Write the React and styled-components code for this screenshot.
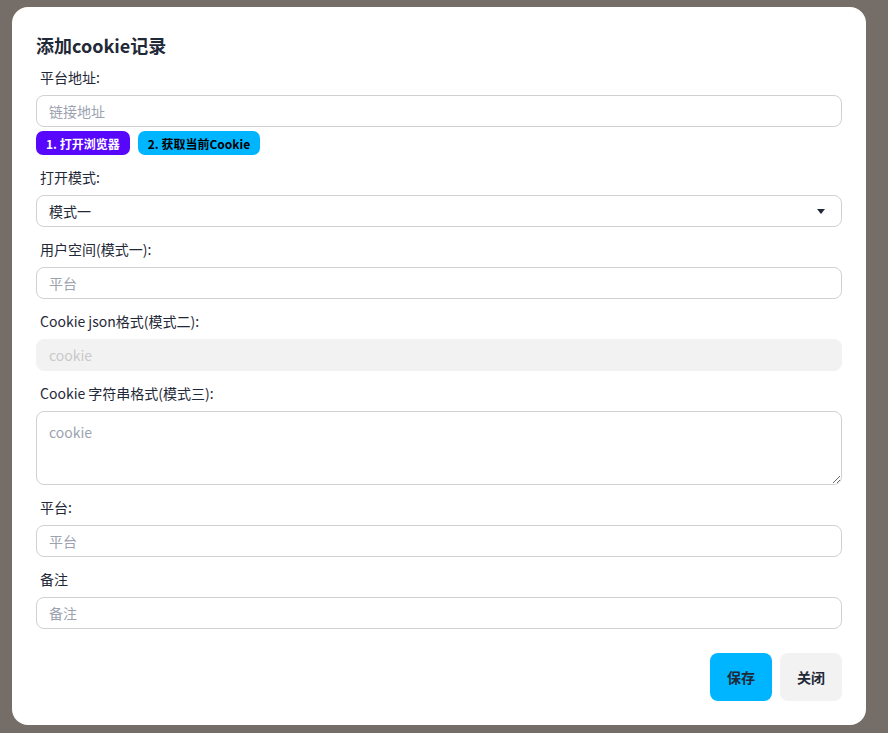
import React from "react";
import styled, { createGlobalStyle } from "styled-components";

const GlobalStyle = createGlobalStyle`
  html, body {
    margin: 0;
    padding: 0;
    background: #756d68;
  }
  body {
    font-family: "Noto Sans CJK SC", "Noto Sans", sans-serif;
    color: #1f2937;
  }
  * { box-sizing: border-box; }
`;

const fields = [
  { label: "用户空间(模式一):", placeholder: "平台" },
];

const App = () => {
  return (
    <>
      <GlobalStyle />
      <Backdrop>
        <Modal>
          <Title>添加cookie记录</Title>

          <Field>
            <Label>平台地址:</Label>
            <Input placeholder="链接地址" />
            <BadgeRow>
              <Badge $bg="#5707fb" $color="#ffffff">1. 打开浏览器</Badge>
              <Badge $bg="#00b5ff" $color="#000000">2. 获取当前Cookie</Badge>
            </BadgeRow>
          </Field>

          <Field>
            <Label>打开模式:</Label>
            <SelectWrap>
              <Select defaultValue="1">
                <option value="1">模式一</option>
                <option value="2">模式二</option>
                <option value="3">模式三</option>
              </Select>
              <Caret viewBox="0 0 8 5" width="8" height="5">
                <path d="M0 0h8L4 5z" fill="#1f2937" />
              </Caret>
            </SelectWrap>
          </Field>

          {fields.map((f) => (
            <Field key={f.label}>
              <Label>{f.label}</Label>
              <Input placeholder={f.placeholder} />
            </Field>
          ))}

          <Field>
            <Label>Cookie json格式(模式二):</Label>
            <Input placeholder="cookie" disabled />
          </Field>

          <Field>
            <Label>Cookie 字符串格式(模式三):</Label>
            <TextArea placeholder="cookie" />
          </Field>

          <Field>
            <Label>平台:</Label>
            <Input placeholder="平台" />
          </Field>

          <Field>
            <Label>备注</Label>
            <Input placeholder="备注" />
          </Field>

          <Actions>
            <ActionButton $bg="#00b5ff">保存</ActionButton>
            <ActionButton $bg="#f2f2f2">关闭</ActionButton>
          </Actions>
        </Modal>
      </Backdrop>
    </>
  );
};

const Backdrop = styled.div`
  min-height: 733px;
  padding: 7px 22px 8px 12px;
`;

const Modal = styled.div`
  width: 854px;
  background: #ffffff;
  border-radius: 16px;
  padding: 24px;
  display: flex;
  flex-direction: column;
  gap: 4px;
`;

const Title = styled.h3`
  margin: 0 0 -4px;
  font-size: 18px;
  line-height: 28px;
  font-weight: 700;
  color: #1f2937;
`;

const Field = styled.div`
  display: flex;
  flex-direction: column;
`;

const Label = styled.label`
  display: block;
  padding: 8px 4px;
  font-size: 14px;
  line-height: 20px;
  color: #1f2937;
`;

const Input = styled.input`
  height: 32px;
  width: 100%;
  padding: 0 12px;
  border: 1px solid #d1d1d1;
  border-radius: 8px;
  font-family: inherit;
  font-size: 14px;
  color: #1f2937;
  background: #ffffff;
  outline: none;

  &::placeholder {
    color: #9ca3af;
  }

  &:disabled {
    background: #f2f2f2;
    border-color: #f2f2f2;
  }

  &:disabled::placeholder {
    color: #c9c9c9;
  }
`;

const BadgeRow = styled.div`
  display: flex;
  gap: 8px;
  margin-top: 4px;
`;

const Badge = styled.button`
  height: 24px;
  padding: 0 10px;
  border: none;
  border-radius: 7px;
  background: ${(p) => p.$bg};
  color: ${(p) => p.$color};
  font-family: inherit;
  font-size: 12px;
  font-weight: 700;
  cursor: pointer;
`;

const SelectWrap = styled.div`
  position: relative;
`;

const Select = styled.select`
  appearance: none;
  height: 32px;
  width: 100%;
  padding: 0 12px;
  border: 1px solid #d1d1d1;
  border-radius: 8px;
  font-family: inherit;
  font-size: 14px;
  color: #1f2937;
  background: #ffffff;
  outline: none;
`;

const Caret = styled.svg`
  position: absolute;
  right: 17px;
  top: 14px;
  pointer-events: none;
`;

const TextArea = styled.textarea`
  height: 74px;
  width: 100%;
  padding: 8px 12px;
  border: 1px solid #d1d1d1;
  border-radius: 8px;
  font-family: inherit;
  font-size: 14px;
  line-height: 24px;
  color: #1f2937;
  outline: none;

  &::placeholder {
    color: #9ca3af;
  }
`;

const Actions = styled.div`
  display: flex;
  justify-content: flex-end;
  gap: 8px;
  margin-top: 20px;
`;

const ActionButton = styled.button`
  height: 48px;
  width: 62px;
  border: none;
  border-radius: 8px;
  background: ${(p) => p.$bg};
  color: #1f2937;
  font-family: inherit;
  font-size: 14px;
  font-weight: 700;
  cursor: pointer;
`;

export default App;
